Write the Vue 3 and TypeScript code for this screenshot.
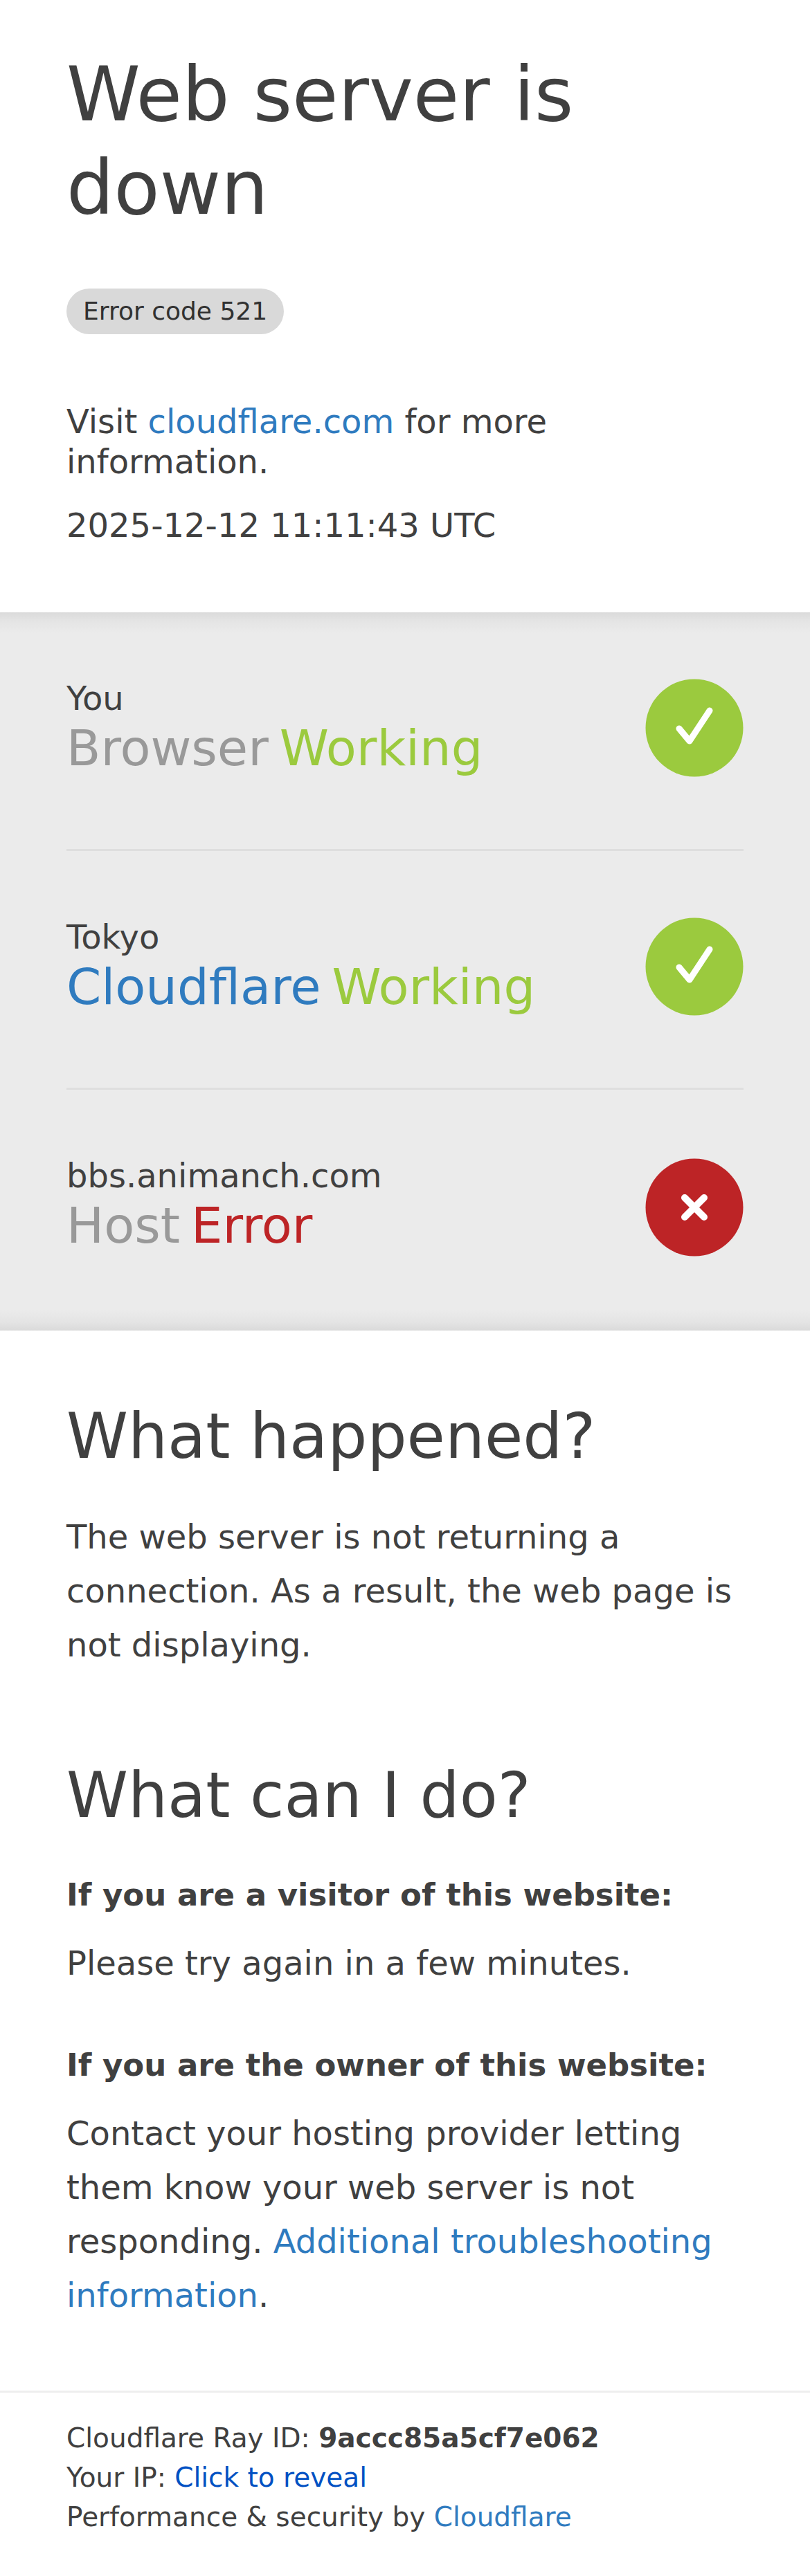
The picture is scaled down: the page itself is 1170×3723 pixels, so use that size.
<script setup lang="ts">
interface Row { label: string; name: string; nameClass: string; status: string; statusClass: string; ok: boolean }
const rows: Row[] = [
  { label: 'You', name: 'Browser', nameClass: 'grey', status: 'Working', statusClass: 'green', ok: true },
  { label: 'Tokyo', name: 'Cloudflare', nameClass: 'blue', status: 'Working', statusClass: 'green', ok: true },
  { label: 'bbs.animanch.com', name: 'Host', nameClass: 'grey', status: 'Error', statusClass: 'red', ok: false },
]
</script>

<template>
  <div class="page">
    <header class="head">
      <h1>Web server is down</h1>
      <span class="badge">Error code 521</span>
      <p class="visit">Visit <a href="#">cloudflare.com</a> for more information.</p>
      <p class="date">2025-12-12 11:11:43 UTC</p>
    </header>

    <section class="status">
      <div v-for="r in rows" :key="r.label" class="row">
        <div class="row-text">
          <div class="label">{{ r.label }}</div>
          <div class="line">
            <span :class="r.nameClass">{{ r.name }}</span>
            <span :class="r.statusClass">{{ r.status }}</span>
          </div>
        </div>
        <svg class="icon" viewBox="0 0 142 142" aria-hidden="true">
          <circle cx="71" cy="71" r="70.5" :fill="r.ok ? '#9bca3e' : '#bd2426'" />
          <path v-if="r.ok" d="M49 72 L64 90 L93 46" fill="none" stroke="#fff" stroke-width="9" stroke-linecap="round" stroke-linejoin="round" />
          <path v-else d="M57 57 L85 85 M85 57 L57 85" fill="none" stroke="#fff" stroke-width="10" stroke-linecap="round" />
        </svg>
      </div>
    </section>

    <section class="info">
      <h2>What happened?</h2>
      <p class="body first">The web server is not returning a connection. As a result, the web page is not displaying.</p>
      <h2 class="second">What can I do?</h2>
      <h3>If you are a visitor of this website:</h3>
      <p class="body">Please try again in a few minutes.</p>
      <h3 class="owner">If you are the owner of this website:</h3>
      <p class="body">Contact your hosting provider letting them know your web server is not responding. <a href="#">Additional troubleshooting information</a>.</p>
    </section>

    <footer class="foot">
      <p>Cloudflare Ray ID: <strong>9accc85a5cf7e062</strong></p>
      <p>Your IP: <a class="reveal" href="#">Click to reveal</a></p>
      <p>Performance &amp; security by <a href="#">Cloudflare</a></p>
    </footer>
  </div>
</template>

<style>
html, body { margin: 0; background: #fff; }
</style>

<style scoped>
.page {
  width: 1170px;
  height: 3723px;
  overflow: hidden;
  font-family: "DejaVu Sans", sans-serif;
  color: #404040;
  background: #fff;
}
a { color: #2f7bbf; text-decoration: none; }
p, h1, h2, h3 { margin: 0; }

.head { padding: 69px 96px 0; height: 885px; box-sizing: border-box; }
h1 { font-size: 108px; line-height: 135px; font-weight: 400; }
.badge {
  display: inline-block;
  margin-top: 78px;
  padding: 0 24px;
  height: 66px;
  line-height: 66px;
  border-radius: 33px;
  background: #d9d9d9;
  font-size: 36px;
  color: #313131;
}
.visit { padding-top: 98px; font-size: 48px; line-height: 57.6px; }
.date { margin-top: 35px; font-size: 48px; line-height: 57.6px; }

.status {
  height: 1038px;
  box-sizing: border-box;
  padding: 0 96px;
  background: linear-gradient(to bottom, #dadada 0, #e4e4e4 12px, #ebebeb 30px, #ebebeb calc(100% - 30px), #e4e4e4 calc(100% - 12px), #dadada 100%);
}
.row {
  height: 345px;
  box-sizing: border-box;
  display: flex;
  justify-content: space-between;
  align-items: flex-start;
  padding-top: 96px;
  border-bottom: 3px solid #dedede;
}
.row:last-child { height: 348px; border-bottom: 0; }
.row:last-child .icon { margin-top: 3px; }
.row-text { margin-top: -2px; }
.label { font-size: 48px; line-height: 60px; }
.line { font-size: 72px; line-height: 90px; display: flex; gap: 16px; margin-top: -3px; }
.icon { width: 142px; height: 142px; flex: none; }
.grey { color: #999; }
.blue { color: #2f7bbf; }
.green { color: #9bca3e; }
.red { color: #bd2426; }

.info { padding: 96px 96px 0; }
h2 { font-size: 90px; line-height: 113px; font-weight: 400; }
.body { font-size: 48px; line-height: 78px; margin-top: 29px; }
.body.first { margin-top: 50px; }
.second { margin-top: 122px; }
h3 { font-size: 45px; line-height: 60px; font-weight: 700; margin-top: 58px; }
.owner { margin-top: 79px; }

.foot {
  margin-top: 99px;
  border-top: 3px solid #eee;
  padding: 37px 96px 0;
  font-size: 39px;
  line-height: 57px;
}
.reveal { color: #0051c3; }
</style>
